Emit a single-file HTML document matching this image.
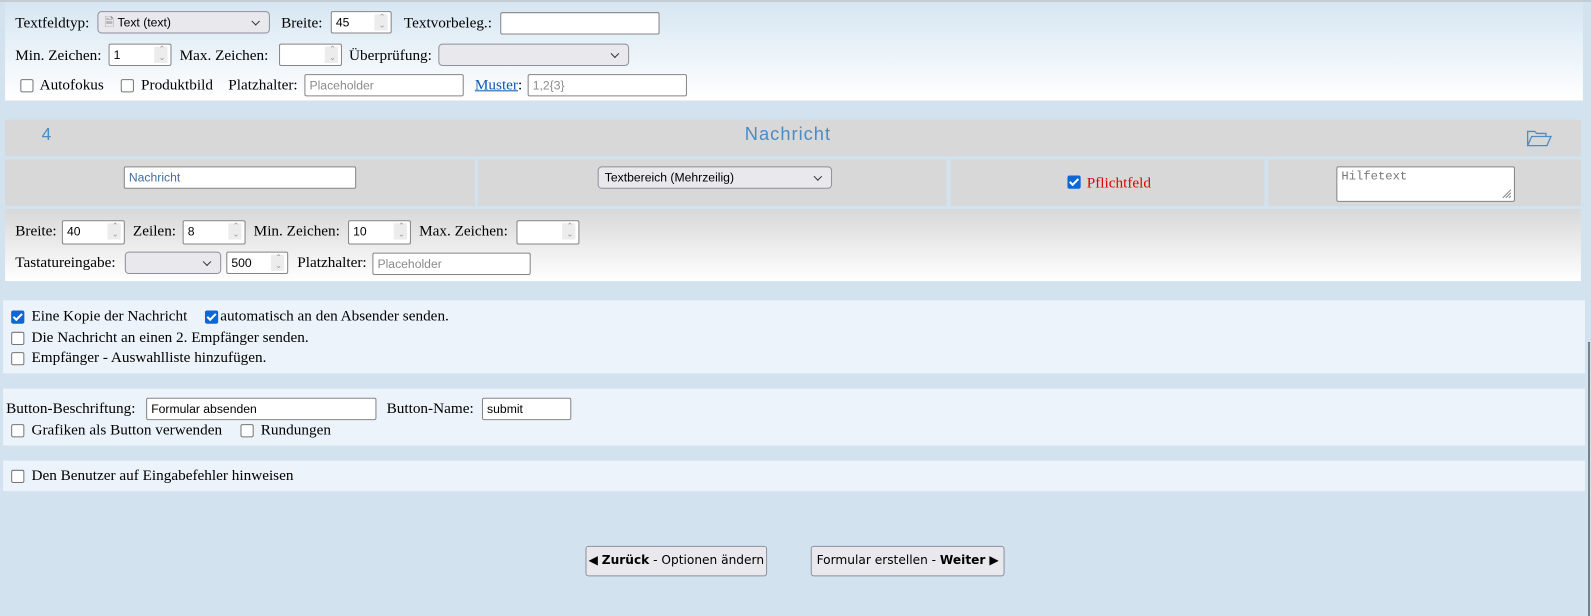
<!DOCTYPE html>
<html><head><meta charset="utf-8">
<style>
*{box-sizing:border-box;margin:0;padding:0}
html,body{width:1591px;height:616px;overflow:hidden}
body{background:#d2e3ef;position:relative;font-family:"Liberation Serif",serif;font-size:15px;color:#000}
#w{position:absolute;left:0;top:0;width:1568px;height:607px;transform:scale(1.0147);transform-origin:0 0}
.a{position:absolute}
.t{position:absolute;white-space:nowrap;line-height:18px}
.in{position:absolute;background:#fff;border:1px solid #858585;border-radius:2px;font-family:"Liberation Sans",sans-serif;font-size:12px;padding-left:4px;line-height:20px;height:22px;white-space:nowrap}
.ph{color:#8a8a8a}
.sel{position:absolute;background:#e9e9ed;border:1px solid #8f8f9d;border-radius:4px;font-family:"Liberation Sans",sans-serif;font-size:12px;padding-left:6px;line-height:20px;height:22px;white-space:nowrap}
.sel:after{content:"";position:absolute;right:10px;top:6px;width:5px;height:5px;border-right:1.3px solid #333;border-bottom:1.3px solid #333;transform:rotate(45deg)}
.sp:after{content:"";position:absolute;right:3px;top:2px;width:13px;height:16px;background:#ececec}
.sp:before{content:"\2303\A\2304";white-space:pre;position:absolute;right:5px;top:1px;font-size:8px;line-height:8px;color:#999;z-index:2}
.cb{position:absolute;width:13px;height:13px;border:1px solid #767676;border-radius:2px;background:#fff}
.ck{position:absolute;width:13px;height:13px;border-radius:2px;background:#0b68d6}
.ck:after{content:"";position:absolute;left:4px;top:1px;width:3px;height:7px;border-right:2px solid #fff;border-bottom:2px solid #fff;transform:rotate(45deg)}
.btn{position:absolute;background:#e9e9ed;border:1px solid #8f8f9d;border-radius:3px;font-family:"DejaVu Sans","Liberation Sans",sans-serif;font-size:12px;text-align:center;line-height:27px;height:30px}
</style></head><body><div id="w">
<div class="a" style="left:0;top:0;width:1568px;height:2px;background:#c4ccd3"></div>
<div class="a" style="left:5px;top:2px;width:1555px;height:97px;background:linear-gradient(#d6e6f2,#fff)"></div>

<div class="t" style="left:15px;top:14px">Textfeldtyp:</div>
<div class="sel" style="left:96px;top:11px;width:170px"><span style="color:#888">&#128462;</span> Text (text)</div>
<div class="t" style="left:277px;top:14px">Breite:</div>
<div class="in sp" style="left:326px;top:11px;width:60px">45</div>
<div class="t" style="left:398px;top:14px">Textvorbeleg.:</div>
<div class="in" style="left:493px;top:12px;width:157px"></div>

<div class="t" style="left:15px;top:46px">Min. Zeichen:</div>
<div class="in sp" style="left:107px;top:43px;width:62px">1</div>
<div class="t" style="left:177px;top:46px">Max. Zeichen:</div>
<div class="in sp" style="left:275px;top:43px;width:62px"></div>
<div class="t" style="left:344px;top:46px">Überprüfung:</div>
<div class="sel" style="left:432px;top:43px;width:188px"></div>

<div class="cb" style="left:20px;top:78px"></div>
<div class="t" style="left:39px;top:75px">Autofokus</div>
<div class="cb" style="left:119px;top:78px"></div>
<div class="t" style="left:139px;top:75px">Produktbild</div>
<div class="t" style="left:225px;top:75px">Platzhalter:</div>
<div class="in ph" style="left:300px;top:73px;width:157px">Placeholder</div>
<div class="t" style="left:468px;top:75px"><span style="color:#0a58b5;text-decoration:underline">Muster</span>:</div>
<div class="in ph" style="left:520px;top:73px;width:157px">1,2{3}</div>

<div class="a" style="left:5px;top:118px;width:1553px;height:36px;background:#d8d8d8"></div>
<div class="t" style="left:41px;top:124px;font-family:'Liberation Sans',sans-serif;font-size:17px;color:#4a8cc4">4</div>
<div class="t" style="left:734px;top:123px;font-family:'Liberation Sans',sans-serif;font-size:18px;letter-spacing:1px;color:#4a8cc4">Nachricht</div>
<svg class="a" style="left:1504px;top:127px" width="26" height="18" viewBox="0 0 26 18"><path d="M1.5 16.5V2.5h7l2 2h9v3M1.5 16.5l4-9h19l-4 9z" fill="none" stroke="#4a8cc4" stroke-width="1.3"/></svg>

<div class="a" style="left:5px;top:157px;width:463px;height:46px;background:#d8d8d8"></div>
<div class="a" style="left:471px;top:157px;width:462px;height:46px;background:#d8d8d8"></div>
<div class="a" style="left:937px;top:157px;width:309px;height:46px;background:#d8d8d8"></div>
<div class="a" style="left:1250px;top:157px;width:308px;height:46px;background:#d8d8d8"></div>
<div class="in" style="left:122px;top:164px;width:229px;color:#3f6fa0">Nachricht</div>
<div class="sel" style="left:589px;top:164px;width:231px">Textbereich (Mehrzeilig)</div>
<div class="ck" style="left:1052px;top:173px"></div>
<div class="t" style="left:1071px;top:172px;color:#e00000">Pflichtfeld</div>
<div class="in" style="left:1317px;top:164px;width:176px;height:35px;font-family:'Liberation Mono',monospace;color:#777;line-height:18px">Hilfetext<svg style="position:absolute;right:2px;bottom:2px" width="10" height="10"><path d="M9 1L1 9M9 4L4 9M9 7L7 9" stroke="#888" stroke-width="1"/></svg></div>

<div class="a" style="left:5px;top:206px;width:1553px;height:71px;background:linear-gradient(#d8d8d8,#fff)"></div>
<div class="t" style="left:15px;top:219px">Breite:</div>
<div class="in sp" style="left:61px;top:217px;width:62px;height:24px">40</div>
<div class="t" style="left:131px;top:219px">Zeilen:</div>
<div class="in sp" style="left:180px;top:217px;width:62px;height:24px">8</div>
<div class="t" style="left:250px;top:219px">Min. Zeichen:</div>
<div class="in sp" style="left:343px;top:217px;width:62px;height:24px">10</div>
<div class="t" style="left:413px;top:219px">Max. Zeichen:</div>
<div class="in sp" style="left:509px;top:217px;width:62px;height:24px"></div>
<div class="t" style="left:15px;top:250px">Tastatureingabe:</div>
<div class="sel" style="left:123px;top:248px;width:95px"></div>
<div class="in sp" style="left:223px;top:248px;width:61px">500</div>
<div class="t" style="left:293px;top:250px">Platzhalter:</div>
<div class="in ph" style="left:367px;top:249px;width:156px">Placeholder</div>

<div class="a" style="left:3px;top:296px;width:1559px;height:72px;background:#edf3fa"></div>
<div class="ck" style="left:11px;top:306px"></div>
<div class="t" style="left:31px;top:303px">Eine Kopie der Nachricht</div>
<div class="ck" style="left:202px;top:306px"></div>
<div class="t" style="left:217px;top:303px">automatisch an den Absender senden.</div>
<div class="cb" style="left:11px;top:327px"></div>
<div class="t" style="left:31px;top:324px">Die Nachricht an einen 2. Empfänger senden.</div>
<div class="cb" style="left:11px;top:347px"></div>
<div class="t" style="left:31px;top:344px">Empfänger - Auswahlliste hinzufügen.</div>

<div class="a" style="left:3px;top:383px;width:1559px;height:56px;background:#edf3fa"></div>
<div class="t" style="left:6px;top:394px">Button-Beschriftung:</div>
<div class="in" style="left:144px;top:392px;width:227px">Formular absenden</div>
<div class="t" style="left:381px;top:394px">Button-Name:</div>
<div class="in" style="left:475px;top:392px;width:88px">submit</div>
<div class="cb" style="left:11px;top:418px"></div>
<div class="t" style="left:31px;top:415px">Grafiken als Button verwenden</div>
<div class="cb" style="left:237px;top:418px"></div>
<div class="t" style="left:257px;top:415px">Rundungen</div>

<div class="a" style="left:3px;top:454px;width:1559px;height:30px;background:#edf3fa"></div>
<div class="cb" style="left:11px;top:463px"></div>
<div class="t" style="left:31px;top:460px">Den Benutzer auf Eingabefehler hinweisen</div>

<div class="a" style="left:1565px;top:337px;width:2px;height:279px;background:#7a7f84"></div>

<div class="btn" style="left:577px;top:538px;width:179px">&#9664; <b>Zurück</b> - Optionen ändern</div>
<div class="btn" style="left:799px;top:538px;width:191px">Formular erstellen - <b>Weiter</b> &#9654;</div>
</div></body></html>
